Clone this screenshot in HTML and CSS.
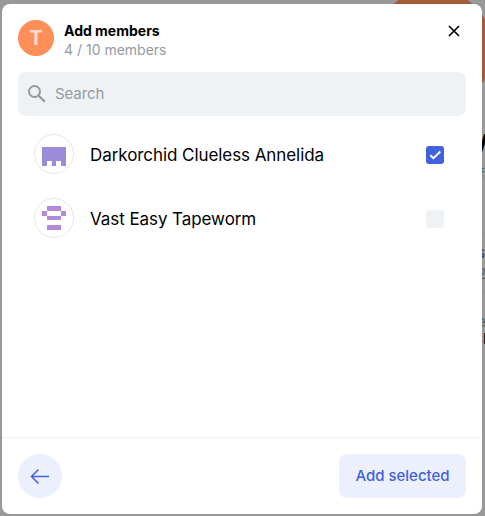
FILE: index.html
```html
<!DOCTYPE html>
<html lang="en">
<head>
<meta charset="utf-8">
<title>Add members</title>
<link rel="stylesheet" href="styles.css">
</head>
<body>
<div class="backdrop" aria-hidden="true">
  <div class="profile-circle"></div>
  <span class="peek peek-title">y</span>
  <span class="peek peek-sub">f</span>
  <span class="peek peek-link">s</span>
  <span class="peek peek-count">2</span>
  <span class="peek peek-label">e</span>
  <span class="peek peek-value">sl</span>
  <div class="rule rule-first"></div>
  <div class="rule rule-second"></div>
</div>
<main class="modal">
  <header class="header">
    <div class="avatar">T</div>
    <div class="heading">
      <h1>Add members</h1>
      <p>4 / 10 members</p>
    </div>
    <button class="close" aria-label="Close">
      <svg width="12" height="12" viewBox="0 0 12 12"><path d="M1 1 11 11M11 1 1 11" fill="none" stroke="#000" stroke-width="1.7"/></svg>
    </button>
  </header>
  <label class="search">
    <svg width="18" height="18" viewBox="0 0 18 18"><g fill="none" stroke="#939ba1" stroke-width="2"><circle cx="6.5" cy="6.5" r="5.5"/><path d="M10.5 10.5 16.8 16.8" stroke-width="2.3"/></g></svg>
    <input type="text" placeholder="Search">
  </label>
  <ul class="members">
    <li>
      <span class="identicon"><svg width="24" height="24" viewBox="0 0 24 24" shape-rendering="crispEdges"><path fill="#9b8bd9" d="M0 5h24v19h-5v-5h-5v5h-4v-5H5v5H0z"/></svg></span>
      <span class="name">Darkorchid Clueless Annelida</span>
      <span class="check checked"><svg width="18" height="18" viewBox="0 0 18 18"><path d="M4.3 9.2 7.5 12.2 14.3 5.5" fill="none" stroke="#fff" stroke-width="2"/></svg></span>
    </li>
    <li>
      <span class="identicon"><svg width="24" height="24" viewBox="0 0 24 24" shape-rendering="crispEdges"><path fill="#b08bd9" d="M5 0h14v5H5zM0 5h5v5H0zM19 5h5v5h-5zM5 10h14v4H5zM5 19h14v5H5z"/></svg></span>
      <span class="name">Vast Easy Tapeworm</span>
      <span class="check"></span>
    </li>
  </ul>
  <footer class="footer">
    <button class="back" aria-label="Back">
      <svg width="20" height="16" viewBox="0 0 20 16"><path d="M19 8.5H2M8.5 1.5 1.5 8.5l7 7" fill="none" stroke="#4360df" stroke-width="1.5"/></svg>
    </button>
    <button class="submit">Add selected</button>
  </footer>
</main>
</body>
</html>
```

FILE: styles.css
```css
* { box-sizing: border-box; }

body {
  margin: 0;
  height: 516px;
  padding: 4px 3px 2px 2px;
  overflow: hidden;
  background: #999;
  font-family: Inter, "Liberation Sans", sans-serif;
  color: #000;
}

button { border: 0; padding: 0; font: inherit; }
svg { display: block; }

.backdrop { position: absolute; inset: 0; overflow: hidden; }
.profile-circle {
  position: absolute;
  left: 373px;
  top: -11px;
  width: 120px;
  height: 120px;
  border-radius: 50%;
  background: #a15b38;
}
.peek { position: absolute; font-size: 15px; line-height: 20px; color: #595d61; }
.peek-title { left: 472px; top: 124px; font-size: 28px; line-height: 32px; font-weight: 700; color: #000; }
.peek-sub { left: 479px; top: 165px; }
.peek-link { left: 477px; top: 243px; color: #283a86; }
.peek-count { left: 477px; top: 264px; }
.peek-label { left: 477px; top: 312px; }
.peek-value { left: 475px; top: 329px; color: #000; }
.rule { position: absolute; left: 0; right: 0; height: 1px; background: #8e9092; }
.rule-first { top: 233px; }
.rule-second { top: 292px; }

.modal {
  position: relative;
  display: flex;
  flex-direction: column;
  width: 480px;
  height: 510px;
  border-radius: 8px;
  background: #fff;
}

.header { display: flex; align-items: flex-start; padding: 16px 22px 0 16px; height: 68px; }
.avatar {
  width: 36px;
  height: 36px;
  border-radius: 50%;
  background: #fe8f59;
  color: rgba(255, 255, 255, .7);
  font-size: 20px;
  line-height: 36px;
  font-weight: 700;
  text-align: center;
}
.heading { flex: 1; margin-left: 10px; }
.heading h1 { margin: 0; padding-top: 1px; font-size: 14px; line-height: 20px; font-weight: 700; }
.heading p { margin: 0; font-size: 14px; line-height: 18px; color: #939ba1; }
.close { margin-top: 5px; background: none; }

.search {
  display: flex;
  align-items: center;
  height: 44px;
  margin: 0 16px;
  padding: 0 10px;
  border-radius: 8px;
  background: #eef2f5;
}
.search input {
  flex: 1;
  min-width: 0;
  margin-left: 9px;
  padding: 0;
  border: 0;
  background: none;
  font: 15px/22px Inter, "Liberation Sans", sans-serif;
  letter-spacing: -.1px;
}
.search input::placeholder { color: #939ba1; opacity: 1; }

.members { flex: 1; margin: 0; padding: 6px 38px 0 32px; list-style: none; }
.members li { display: flex; align-items: center; height: 64px; }
.identicon {
  display: grid;
  place-items: center;
  width: 40px;
  height: 40px;
  border: 1px solid #e6e6e6;
  border-radius: 50%;
}
.name { flex: 1; margin: 2px 0 0 16px; font-size: 17px; line-height: 24px; letter-spacing: -.07px; }
.check { width: 18px; height: 18px; margin-top: 2px; border-radius: 3px; background: #eef2f5; }
.checked { background: #4360df; }

.footer {
  display: flex;
  align-items: center;
  justify-content: space-between;
  height: 77px;
  padding: 0 16px;
  border-top: 1px solid #eef0f2;
}
.back { display: grid; place-items: center; width: 44px; height: 44px; border-radius: 50%; background: #ecf0fc; }
.submit {
  width: 127px;
  height: 44px;
  border-radius: 8px;
  background: #ecf0fc;
  color: #4360df;
  font-size: 15px;
  line-height: 20px;
  font-weight: 500;
  padding-bottom: 1px;
}
```
